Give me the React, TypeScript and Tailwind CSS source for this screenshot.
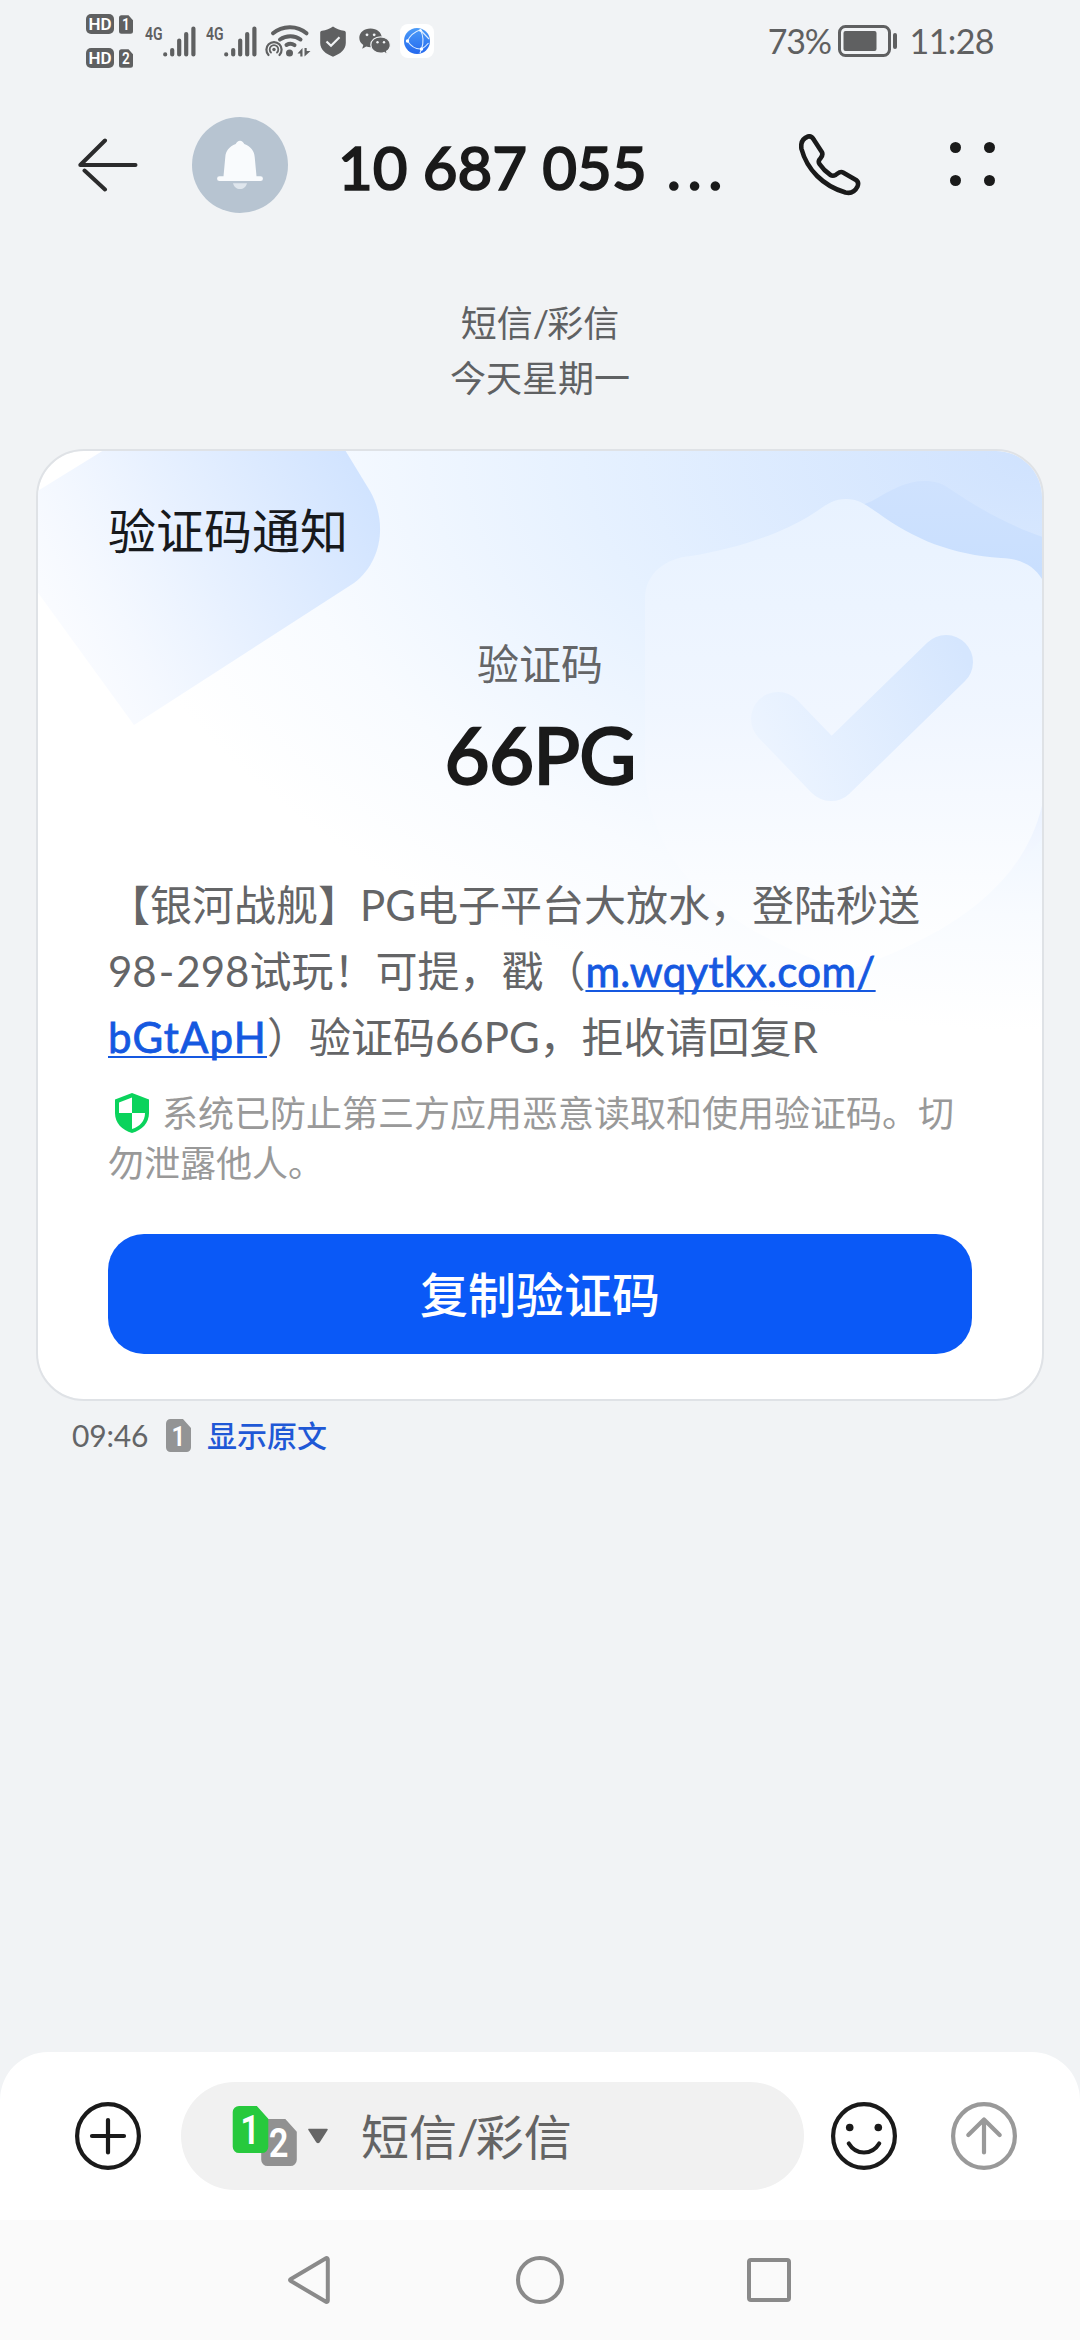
import { clsx } from "clsx";

const SIM_PATH =
  "M3 0H9.5L14 5V16a2.5 2.5 0 0 1-2.5 2.5H2.5A2.5 2.5 0 0 1 0 16V2.5A2.5 2.5 0 0 1 2.5 0Z";

function SimBadge({ label, className }: { label: string; className?: string }) {
  return (
    <svg viewBox="0 0 14 18.5" className={clsx("shrink-0", className)}>
      <path d={SIM_PATH} fill="currentColor" />
      <text
        transform="translate(6.9 15) scale(0.85 1)"
        textAnchor="middle"
        fontSize="16"
        fontWeight="600"
        fill="#fff"
        className="font-['Roboto',sans-serif]"
      >
        {label}
      </text>
    </svg>
  );
}

function HdRow({ sim }: { sim: string }) {
  return (
    <div className="flex items-center gap-[5px]">
      <span className="flex h-5 w-7 items-center justify-center rounded-[5px] bg-[#5f6061] font-['Roboto',sans-serif] text-[17px] leading-none font-semibold text-white">
        HD
      </span>
      <SimBadge label={sim} className="h-[19px] w-[14px]" />
    </div>
  );
}

function Signal() {
  return (
    <div className="flex h-[31px] w-[51px]">
      <span className="w-[18px] origin-left scale-x-[0.74] font-['Roboto',sans-serif] text-[19px] leading-[15px] font-semibold">
        4G
      </span>
      <svg viewBox="0 0 33 31" className="h-[31px] w-[33px] shrink-0">
        <path
          d="M2.200 28.400v.1M9.200 24v4.500M16.200 18v10.500M16.200 14.500v14M23.200 8v20.500M30.400 2.500v26"
          fill="none"
          stroke="currentColor"
          strokeWidth="4.200"
          strokeLinecap="round"
        />
      </svg>
    </div>
  );
}

function WifiIcon() {
  return (
    <svg viewBox="0 0 46 32" className="h-8 w-[46px]">
      <g fill="none" stroke="currentColor" strokeLinecap="round">
        <path d="M8 8.300C17 .600 32-.200 41.500 8.300" strokeWidth="4" />
        <path d="M15 14.500C21 10 30 10 35.500 14.500" strokeWidth="4" />
        <path d="M21.500 20C24 18.500 27 18.500 29.500 20.200" strokeWidth="4" />
        <path d="M3.500 30a7.600 7.600 0 1 1 11 0" strokeWidth="2.200" />
        <path d="M6 27.500a4.300 4.300 0 1 1 6 0" strokeWidth="1.800" />
      </g>
      <circle cx="9" cy="24.500" r="1.700" fill="currentColor" />
      <circle cx="24.500" cy="28" r="3.500" fill="currentColor" />
      <path d="M32.500 28.500l5-5.500v8.500h-2.200v-3ZM45.500 26L39.500 31.500v-8.500h2.200v3Z" fill="currentColor" />
    </svg>
  );
}

function ShieldCheckIcon() {
  return (
    <svg viewBox="0 0 26 31" className="h-[31px] w-[26px]">
      <path
        d="M13 .5c3 2.200 7 3.800 11 4.200 1.300.2 1.800.8 1.800 2V17c0 6.500-5.500 11-12.800 13.700C5.700 28 .2 23.500.2 17V6.700c0-1.200.5-1.800 1.800-2 4-.4 8-2 11-4.200Z"
        fill="currentColor"
      />
      <path d="M6.500 15.500l4.500 4.300 8.500-8.500" fill="none" stroke="#f1f3f5" strokeWidth="2.200" />
    </svg>
  );
}

function ChatBubblesIcon() {
  return (
    <svg viewBox="0 0 32 27" className="h-[27px] w-8">
      <path
        d="M11.500.5C5 .5.300 4.600.300 9.800c0 3 1.500 5.600 4 7.300L3.200 20.800l4-2.200c1.400.4 2.900.6 4.300.6 6.300 0 11.300-4.200 11.300-9.400S18 .5 11.500.5Z"
        fill="currentColor"
      />
      <path
        d="M21.500 8.800c-5.500 0-9.700 3.600-9.700 8.100s4.200 8.200 9.700 8.200c1.300 0 2.500-.2 3.600-.6l3.300 1.900-.8-3.100c2.300-1.500 3.700-3.800 3.700-6.400 0-4.500-4.300-8.100-9.800-8.100Z"
        fill="currentColor"
        stroke="#f1f3f5"
        strokeWidth="1.200"
      />
      <g fill="#f1f3f5">
        <circle cx="8" cy="6.800" r="1.400" />
        <circle cx="15.200" cy="6.800" r="1.400" />
        <circle cx="18.500" cy="14.300" r="1.200" />
        <circle cx="25" cy="14.300" r="1.200" />
      </g>
    </svg>
  );
}

function BrowserIcon() {
  return (
    <svg viewBox="0 0 34 34" className="size-[34px]">
      <defs>
        <linearGradient id="globe" x1="0" y1="0" x2="0" y2="1">
          <stop offset="0" stopColor="#4c9cf8" />
          <stop offset="1" stopColor="#2468ee" />
        </linearGradient>
      </defs>
      <rect width="34" height="34" rx="8" fill="#fff" />
      <circle cx="17" cy="17" r="13" fill="url(#globe)" />
      <g fill="none" stroke="#dcecff" strokeWidth="1.100">
        <path d="M21 5.500C14 8 10 11 7.500 17c4 6 9 8.500 14 8 3-1.500 5-3.500 7-6" />
        <path d="M20.500 6c3 6 3.500 12 1 19L20 29M20.500 6l8.500 9" />
      </g>
      <circle cx="7.500" cy="17" r="1.700" fill="#fff" />
      <circle cx="21.500" cy="25" r="1.700" fill="#fff" />
      <circle cx="20.500" cy="6.500" r="1.300" fill="#fff" />
    </svg>
  );
}

function StatusBar() {
  return (
    <div className="flex h-[82px] w-full items-center pr-[84px] pl-[86px] text-[#5f6061]">
      <div className="flex flex-col gap-[14px]">
        <HdRow sim="1" />
        <HdRow sim="2" />
      </div>
      <div className="ml-[12px] flex items-center gap-[10px]">
        <Signal />
        <Signal />
      </div>
      <div className="ml-[8px] flex items-center">
        <WifiIcon />
        <span className="ml-[9px]">
          <ShieldCheckIcon />
        </span>
        <span className="ml-[13px]">
          <ChatBubblesIcon />
        </span>
        <span className="ml-[9px]">
          <BrowserIcon />
        </span>
      </div>
      <span className="ml-auto text-[34px] leading-none tracking-[-1.3px]">73%</span>
      <svg viewBox="0 0 60 32" className="ml-[7px] h-8 w-[60px]">
        <rect x="1.500" y="1.500" width="50" height="29" rx="6" fill="none" stroke="currentColor" strokeWidth="3" />
        <rect x="5.500" y="6" width="33" height="20" rx="2" fill="currentColor" />
        <rect x="55" y="8" width="4" height="16" rx="2" fill="currentColor" />
      </svg>
      <span className="mr-[2px] ml-[12px] text-[34px] leading-none tracking-[-0.6px]">11:28</span>
    </div>
  );
}

function Header() {
  return (
    <header className="flex h-[166px] w-full items-center pr-[85px] pl-[78px] text-[#1a1a1a]">
      <svg viewBox="0 0 60 54" className="h-[54px] w-[60px] shrink-0">
        <path
          d="M57.500 27H2.300L27 2.500M6.500 32.500L27 51.500"
          fill="none"
          stroke="#2b2b2c"
          strokeWidth="4"
          strokeLinecap="round"
          strokeLinejoin="round"
        />
      </svg>
      <div className="ml-[54px] flex size-24 shrink-0 items-center justify-center rounded-full bg-[#b7c4d1]">
        <svg viewBox="0 0 46 50" className="h-[50px] w-[46px]">
          <path
            d="M23 .8c2 0 3.300 1.300 4.300 3.200C34 6.500 37.300 11 37.700 17L39.500 36.200h4a2.300 2.300 0 0 1 0 4.900h-41a2.300 2.300 0 0 1 0-4.900h4L8.300 17C8.700 11 12 6.500 18.700 4 19.700 2.100 21 .8 23 .8Z"
            fill="#f9fbfd"
          />
          <path d="M16 43.200h14c-1 3.600-3.600 5.800-7 5.800s-6-2.200-7-5.800Z" fill="#dfe6ed" />
        </svg>
      </div>
      <h1 className="ml-[50px] pt-[4px] text-[60px] leading-[72px] font-medium whitespace-nowrap [-webkit-text-stroke:1.6px_currentColor]">
        10 687 055 <span className="ml-[5px] tracking-[6.5px]">...</span>
      </h1>
      <svg viewBox="0 0 62 62" className="ml-auto size-[62px] shrink-0">
        <path
          d="M9 2.500C12.500 1.500 14 4 15 6L22.800 18c2 3.500-.8 5.500-2.300 7.500-1 1.500-1 3 0 4.500 3 4.500 6.500 8 11 11 1.500 1 3.500.8 5 0 2.500-1.500 4.500-4.300 7.500-2.500L57 46c2.500 1.700 2.500 4 1.500 6.500C56 57.500 52 59.800 46.500 58.500 24 52 8 35.500 2.500 15 1.500 9 3.500 4.500 9 2.500Z"
          fill="none"
          stroke="currentColor"
          strokeWidth="4.600"
          strokeLinejoin="round"
        />
      </svg>
      <div className="ml-[89px] grid grid-cols-2 gap-x-[23px] gap-y-[22px] pb-[2px]">
        <i className="size-[11px] rounded-full bg-[#1a1a1a]" />
        <i className="size-[11px] rounded-full bg-[#1a1a1a]" />
        <i className="size-[11px] rounded-full bg-[#1a1a1a]" />
        <i className="size-[11px] rounded-full bg-[#1a1a1a]" />
      </div>
    </header>
  );
}

// Decorative artwork behind the card content
function CardArt() {
  return (
    <svg viewBox="0 0 1004 948" className="absolute inset-0 h-full w-full">
      <defs>
        <linearGradient id="tile" gradientUnits="userSpaceOnUse" x1="20" y1="180" x2="330" y2="20">
          <stop offset="0" stopColor="#f6f9ff" stopOpacity="0.6" />
          <stop offset="0.450" stopColor="#e8f1ff" />
          <stop offset="1" stopColor="#d0e3ff" />
        </linearGradient>
        <linearGradient id="shieldFront" x1="0" y1="0" x2="0" y2="1">
          <stop offset="0" stopColor="#e8f2ff" />
          <stop offset="0.450" stopColor="#f0f6ff" />
          <stop offset="0.800" stopColor="#fafcff" />
          <stop offset="1" stopColor="#fff" />
        </linearGradient>
        <linearGradient id="shieldBack" x1="0" y1="0" x2="0" y2="1">
          <stop offset="0" stopColor="#cfe2fe" />
          <stop offset="0.200" stopColor="#c9dffe" />
          <stop offset="0.700" stopColor="#e9f1ff" />
          <stop offset="1" stopColor="#fff" />
        </linearGradient>
        <linearGradient id="tick" gradientUnits="userSpaceOnUse" x1="730" y1="310" x2="930" y2="210">
          <stop offset="0" stopColor="#ecf4ff" />
          <stop offset="1" stopColor="#d5e6fe" />
        </linearGradient>
      </defs>
      <path d="M-2 41L66-1H307L332 40C349 70 345 110 316 132L96 274L-2 139Z" fill="url(#tile)" />
      <path
        d="M887 30C868 30 855 38 834 50L780 72L900 480C960 440 1004 390 1010 380V88C970 74 945 60 912 38C904 32 896 30 887 30Z"
        fill="url(#shieldBack)"
      />
      <path
        d="M808 48C795 48 788 54 776 62C742 84 696 98 653 105C628 107 607 122 607 148V310C607 420 690 480 808 520C926 480 1009 420 1009 310V148C1009 122 988 107 963 107C915 104 875 88 840 62C828 54 821 48 808 48Z"
        fill="url(#shieldFront)"
      />
      <path
        d="M740 268L793 323L908 211"
        fill="none"
        stroke="url(#tick)"
        strokeWidth="54"
        strokeLinecap="round"
        strokeLinejoin="round"
      />
    </svg>
  );
}

function LinkText({ text, className }: { text: string; className?: string }) {
  return (
    <a
      href="#"
      className={clsx(
        "text-[#1558e0] underline decoration-[2px] underline-offset-[3px] [-webkit-text-stroke:0.8px_currentColor] [text-decoration-skip-ink:none]",
        className
      )}
    >
      {text}
    </a>
  );
}

function ProtectIcon() {
  return (
    <svg viewBox="0 0 34 40" className="mr-[13px] ml-[7px] inline-block h-10 w-[34px] align-[-6px]">
      <path d="M17 0L34 6.500V20C34 30 27 37 17 40C7 37 0 30 0 20V6.500Z" fill="#0ad35c" />
      <path d="M17 4.500V20H4V9.500ZM17 20H30C30 28 25 33.500 17 36Z" fill="#fff" />
    </svg>
  );
}

function CodeCard() {
  return (
    <section className="relative mx-9 flex h-[952px] flex-col overflow-hidden rounded-[48px] border-2 border-[#dfe2e6] bg-white bg-[radial-gradient(ellipse_960px_580px_at_100%_0%,#cfe2fe_0%,#e6f1ff_48%,#f8fbff_80%,#ffffff_100%)] bg-clip-padding px-[70px] pt-[49px]">
      <CardArt />
      <div className="relative flex flex-col">
        <h2 className="text-5xl leading-[62px] text-[#17191c]">验证码通知</h2>
        <p className="mt-[70px] text-center text-[42px] leading-[64px] text-[#646567]">验证码</p>
        <p className="mt-[8px] text-center text-[78px] leading-[100px] tracking-[-0.8px] text-[#1a1a1a] [-webkit-text-stroke:2.4px_currentColor]">
          66PG
        </p>
        <div className="mt-[68px] text-[42px] leading-[66px] whitespace-nowrap text-[#646567]">
          <p>【银河战舰】PG电子平台大放水，登陆秒送</p>
          <p>
            98<span className="mx-[2px]">-</span>298试玩！可提，戳（
            <LinkText text="m.wqytkx.com/" className="tracking-[0.35px]" />
          </p>
          <p>
            <LinkText text="bGtApH" className="tracking-[1.2px]" />
            ）验证码66PG，拒收请回复R
          </p>
        </div>
        <div className="mt-[18px] text-4xl leading-[50px] whitespace-nowrap text-[#999]">
          <p className="h-[50px]">
            <ProtectIcon />
            系统已防止第三方应用恶意读取和使用验证码。切
          </p>
          <p>勿泄露他人。</p>
        </div>
        <button className="mt-[46px] h-[120px] rounded-[36px] bg-[#0a59f7] pt-[2px] text-5xl font-medium text-white">
          复制验证码
        </button>
      </div>
    </section>
  );
}

function Composer() {
  return (
    <div className="flex h-[168px] items-center rounded-t-[48px] bg-white pl-[75px] text-[#1a1a1a]">
      <svg viewBox="0 0 66 68" className="h-[68px] w-[66px] shrink-0">
        <g fill="none" stroke="currentColor" strokeWidth="4.200" strokeLinecap="round">
          <ellipse cx="33" cy="34" rx="30.900" ry="31.900" />
          <path d="M33 18v32.500M17 34h32" />
        </g>
      </svg>
      <div className="ml-10 flex h-[108px] w-[623px] items-center rounded-full bg-[#f1f1f1] pl-[50px]">
        <div className="relative h-[60px] w-[67px]">
          <SimBadge label="2" className="absolute right-0 bottom-0 h-[47px] w-[38px] text-[#919191]" />
          <SimBadge label="1" className="absolute top-0 left-0 h-[47px] w-[39px] text-[#27c93d]" />
        </div>
        <svg viewBox="0 0 22 16" className="ml-[9px] h-4 w-[22px]">
          <path
            d="M2 1.500H20L12 14Q11 15 10 14Z"
            fill="#666"
            stroke="#666"
            strokeWidth="1.500"
            strokeLinejoin="round"
          />
        </svg>
        <span className="ml-[32px] pt-[2px] text-5xl leading-none text-[#646464]">
          短信<span className="tracking-[-3px]">/</span>彩信
        </span>
      </div>
      <svg viewBox="0 0 66 68" className="ml-[27px] h-[68px] w-[66px] shrink-0">
        <g fill="none" stroke="currentColor" strokeWidth="4.200" strokeLinecap="round">
          <ellipse cx="33" cy="34" rx="30.900" ry="31.900" />
          <path d="M17.800 41.500C25 53.500 41 53.500 48.200 41.500" />
        </g>
        <circle cx="18.700" cy="25.500" r="3.800" fill="currentColor" />
        <circle cx="47.300" cy="25.500" r="3.800" fill="currentColor" />
      </svg>
      <svg viewBox="0 0 66 68" className="ml-[54px] h-[68px] w-[66px] shrink-0 text-[#999]">
        <g fill="none" stroke="currentColor" strokeWidth="4.200" strokeLinecap="round" strokeLinejoin="round">
          <ellipse cx="33" cy="34" rx="30.900" ry="31.900" />
          <path d="M33 18v32.500M17.300 33L33 17.500L48.700 33" />
        </g>
      </svg>
    </div>
  );
}

function NavBar() {
  return (
    <nav className="flex h-[120px] items-center bg-[#fafafa] pl-[287px] text-[#8a8a8a]">
      <svg viewBox="0 0 43 50" className="h-[50px] w-[43px]">
        <path
          d="M39 3.200L3.500 24.200Q2.500 25 3.500 25.800L39 46.800Q40.800 47.200 40.800 45.500V4.500Q40.800 2.800 39 3.200Z"
          fill="none"
          stroke="currentColor"
          strokeWidth="4"
          strokeLinejoin="round"
        />
      </svg>
      <div className="ml-[186px] size-12 rounded-full border-4 border-current" />
      <div className="ml-[183px] size-11 rounded-[4px] border-4 border-current" />
    </nav>
  );
}

export default function App() {
  return (
    <main className="flex h-[2340px] w-[1080px] flex-col overflow-hidden bg-[#f1f3f5] font-['Lato','Noto_Sans_CJK_SC',sans-serif] [text-spacing-trim:space-all]">
      <StatusBar />
      <Header />
      <div className="mt-[48px] mb-[43px] text-center text-4xl leading-[55px] text-[#5f6163]">
        <p>
          短信<span className="tracking-[-2px]">/</span>彩信
        </p>
        <p>今天星期一</p>
      </div>
      <CodeCard />
      <div className="flex h-[68px] items-center pl-[72px] text-[30px] leading-none">
        <span className="tracking-[-0.2px] text-[#646567]">09:46</span>
        <SimBadge label="1" className="ml-[17px] h-[33px] w-[27px] text-[#939495]" />
        <span className="ml-[15px] font-medium text-[#1f58d6]">显示原文</span>
      </div>
      <div className="mt-auto">
        <Composer />
        <NavBar />
      </div>
    </main>
  );
}
